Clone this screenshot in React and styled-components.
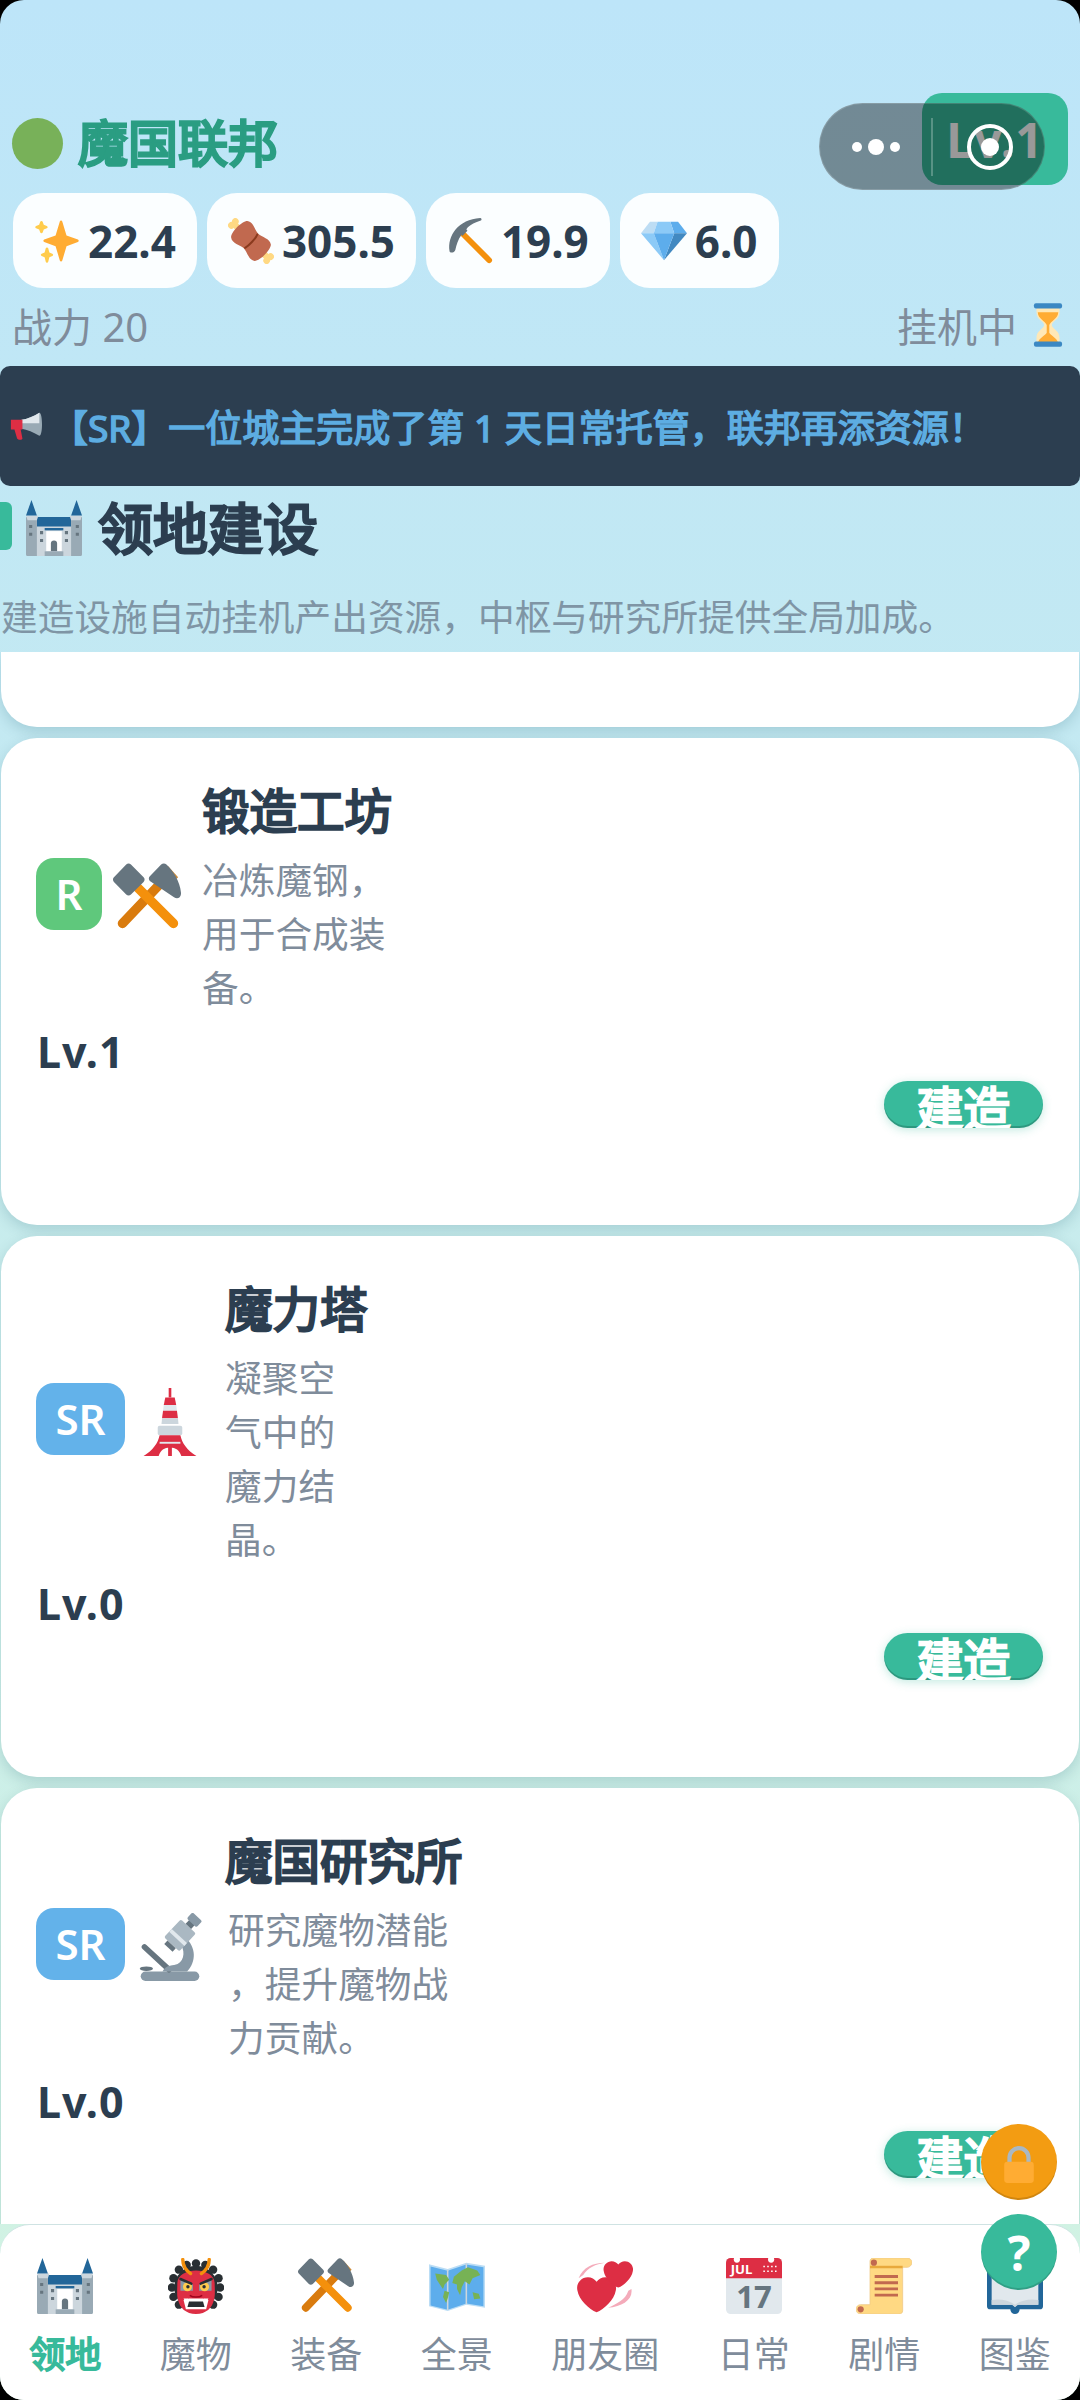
import styled, { createGlobalStyle } from 'styled-components';

const GlobalStyle = createGlobalStyle`
    html, body {
        margin: 0;
        padding: 0;
        background: #000;
    }
    * {
        box-sizing: border-box;
    }
`;

const FONT = `"Noto Sans", "Noto Sans CJK SC", sans-serif`;
const INK = '#2c3e50';
const MUTED = '#7f8c9b';
const TEAL = '#38ba9b';
const HEART = 'M35.885 11.833c0-5.45-4.418-9.868-9.867-9.868-3.308 0-6.227 1.633-8.018 4.129-1.791-2.496-4.71-4.129-8.017-4.129-5.45 0-9.868 4.417-9.868 9.868 0 .772.098 1.52.266 2.241C1.751 22.587 11.216 31.568 18 34.034c6.783-2.466 16.249-11.447 17.617-19.959.17-.721.268-1.469.268-2.242z';

const Screen = styled.div`
    position: relative;
    width: 1080px;
    height: 2400px;
    overflow: hidden;
    display: flex;
    flex-direction: column;
    border-radius: 24px;
    background: linear-gradient(180deg, #bde5f9 0%, #c3e9f2 30%, #d2f3e2 100%);
    font-family: ${FONT};
    color: ${INK};
`;

const EmojiSvg = styled.svg`
    display: block;
    flex: none;
    width: ${(p) => p.$size}px;
    height: ${(p) => p.$size}px;
`;

function Emoji({ size, children }) {
    return <EmojiSvg $size={size} viewBox="0 0 36 36">{children}</EmojiSvg>;
}

const Sparkles = ({ size }) => <Emoji size={size}>
    <path fill="#FFAC33" d="M34.347 16.893l-8.899-3.294-3.323-10.891c-.128-.42-.517-.708-.956-.708-.439 0-.828.288-.956.708l-3.322 10.891-8.9 3.294c-.393.146-.653.519-.653.938 0 .418.26.793.653.938l8.895 3.293 3.324 11.223c.126.424.516.715.959.715.442 0 .833-.291.959-.716l3.324-11.223 8.896-3.293c.391-.144.652-.518.652-.937 0-.418-.261-.792-.653-.938z" />
    <path fill="#FFCC4D" d="M14.347 27.894l-2.314-.856-.9-3.3c-.118-.436-.513-.738-.964-.738-.451 0-.846.302-.965.737l-.9 3.3-2.313.856c-.393.145-.653.52-.653.938 0 .418.26.793.653.938l2.301.853.907 3.622c.112.444.511.756.97.756.459 0 .858-.312.97-.757l.907-3.622 2.301-.853c.393-.144.653-.519.653-.937 0-.418-.26-.793-.653-.937zM10.009 6.231l-2.364-.875-.876-2.365c-.145-.393-.519-.653-.938-.653-.418 0-.792.26-.938.653l-.875 2.365-2.365.875c-.393.146-.653.52-.653.938 0 .418.26.793.653.938l2.365.875.875 2.365c.146.393.52.653.938.653.418 0 .792-.26.938-.653l.875-2.365 2.365-.875c.393-.146.653-.52.653-.938 0-.418-.26-.792-.653-.938z" />
</Emoji>;

const Meat = ({ size }) => <Emoji size={size}>
    <g transform="rotate(-45 18 18)">
        <rect x="15.500" y="-1" width="5" height="38" fill="#FFD983" />
        <circle cx="15.800" cy="-1.500" r="2.600" fill="#FFD983" />
        <circle cx="20.200" cy="-1.500" r="2.600" fill="#FFD983" />
        <circle cx="15.800" cy="37.500" r="2.600" fill="#FFD983" />
        <circle cx="20.200" cy="37.500" r="2.600" fill="#FFD983" />
        <path fill="#C1694F" d="M9 5c3-3 15-3 18 0 3 4-1 9-1 13s4 9 1 13c-3 3-15 3-18 0-3-4 1-9 1-13S6 9 9 5z" />
        <path fill="none" stroke="#8A3A1E" strokeWidth="1.600" strokeLinecap="round" d="M11 18.500c3 .8 11 .8 14-.6" />
    </g>
</Emoji>;

const Pick = ({ size }) => <Emoji size={size}>
    <path fill="none" stroke="#F4900C" strokeWidth="4.500" strokeLinecap="round" d="M10 10l23 23" />
    <path fill="#66757F" d="M2 26C0 14 9 1 26 0c1 0 1.500 1.500.500 2-6 2-10 4-12 8l-3 3c-3 4-4 8-5 12-.5 2-4 3-4.500 1z" />
    <path fill="#66757F" d="M8 8l4-3 4 5-4 4z" />
</Emoji>;

const Gem = ({ size }) => <Emoji size={size}>
    <path fill="#BDDDF4" d="M13 3H7l-7 9h10z" />
    <path fill="#5DADEC" d="M36 12l-7-9h-6l3 9z" />
    <path fill="#4289C1" d="M26 12h10L18 33z" />
    <path fill="#8CCAF7" d="M10 12H0l18 21zm3-9l-3 9h16l-3-9z" />
    <path fill="#5DADEC" d="M18 33l-8-21h16z" />
</Emoji>;

const Hourglass = ({ size }) => <Emoji size={size}>
    <path fill="#FFE8B6" d="M9 4h18v4c0 6-6 7-6 10s6 4 6 10v4H9v-4c0-6 6-7 6-10S9 14 9 8z" />
    <path fill="#FFAC33" d="M10 8h16c0 5-6 7-7 10v6c1 2 6 4 7 8H10c1-4 6-6 7-8v-6c-1-3-7-5-7-10z" />
    <rect x="7" y="1" width="22" height="4" rx="1.500" fill="#3B88C3" />
    <rect x="7" y="31" width="22" height="4" rx="1.500" fill="#3B88C3" />
</Emoji>;

const Megaphone = ({ size }) => <Emoji size={size}>
    <path fill="#99AAB5" d="M33 3c2 0 3 6 3 13s-1 13-3 13c-6-4-14-7-20-8V11c6-1 14-4 20-8z" />
    <path fill="#E1E8ED" d="M33 3c-6 4-14 7-20 8v4h20z" />
    <path fill="#DD2E44" d="M1 11h13v11H12l2 10c0 2-5 2-6 0L5 22H1z" />
</Emoji>;

const Castle = ({ size }) => <Emoji size={size}>
    <path fill="#CCD6DD" d="M6 13h24v23H6z" />
    <path fill="#226699" d="M7 11h22v6H7z" />
    <path fill="#99AAB5" d="M0 11h7v25H1a1 1 0 0 1-1-1zM29 11h7v24a1 1 0 0 1-1 1h-6z" />
    <path fill="#CCD6DD" d="M0 10h8l-1 3H1zM28 10h8l-1 3h-6z" />
    <path fill="#226699" d="M3.500 0L7 10H0zM32.500 0L36 10h-7z" />
    <path fill="#226699" d="M12 18h12v1.500H12z" />
    <path fill="#FFF" d="M13 20h10v13H13z" />
    <path fill="#66757F" d="M16 33v-5a2 2 0 0 1 4 0v5z" />
    <path fill="#99AAB5" d="M12 33h12v3H12z" />
    <path fill="#66757F" d="M2 16h2v2H2zM2 21h2v2H2zM32 16h2v2h-2zM32 21h2v2h-2zM9 20h2v2H9zM9 25h2v2H9zM25 20h2v2h-2zM25 25h2v2h-2z" />
</Emoji>;

const Hammers = ({ size }) => <Emoji size={size}>
    <path stroke="#D97B0E" strokeWidth="5" strokeLinecap="round" d="M25 11L5 32" />
    <path stroke="#F4900C" strokeWidth="5" strokeLinecap="round" d="M11 11l21 21" />
    <path fill="#C98A3A" d="M29 1.500l5.500 6-3 3z" />
    <path fill="#66757F" d="M7 .800c.700-.700 1.800-.700 2.500 0l6.700 6.700c.700.700.700 1.800 0 2.500L9.500 16.700c-.700.700-1.800.700-2.500 0L.500 10c-.700-.700-.700-1.800 0-2.500z" />
    <path fill="#66757F" d="M25.500.800c.800-.800 2-.800 2.800 0 3.500 3.200 7.200 9 7.700 15 .200 2.600-2 3.700-3.700 2.300L19.500 9.500c-.700-.700-.700-1.800 0-2.500z" />
</Emoji>;

const Tower = ({ size }) => <Emoji size={size}>
    <path fill="#DD2E44" d="M17.300 0h1.400v5h-1.400z" />
    <path fill="#DD2E44" d="M15.500 5h5l.800 4h-6.600z" />
    <path fill="#E1E8ED" d="M14.700 9h6.600l.400 3h-7.400z" />
    <path fill="#DD2E44" d="M14.300 12h7.400l.500 4h-8.400z" />
    <path fill="#CCD6DD" d="M13.800 16h8.400l.300 3h-9z" />
    <path fill="#CCD6DD" d="M12.500 20h11a1 1 0 0 1 1 1v3a1 1 0 0 1-1 1h-11a1 1 0 0 1-1-1v-3a1 1 0 0 1 1-1z" />
    <path fill="#DD2E44" d="M12.500 25h11c.800 4 3.500 8 8.500 11H24c-1-3-3-4.500-6-4.500S13 33 12 36H4c5-3 7.700-7 8.500-11z" />
    <path fill="#DD2E44" d="M17 27h2v9h-2z" />
    <path fill="#E1E8ED" d="M12.500 28.500h11v1h-11z" />
</Emoji>;

const Microscope = ({ size }) => <Emoji size={size}>
    <rect x="2.500" y="31" width="31" height="5" rx="2.500" fill="#8899A6" />
    <path fill="none" stroke="#66757F" strokeWidth="3" strokeLinecap="round" d="M4.500 18l13 12" />
    <ellipse cx="5.500" cy="29.500" rx="3.500" ry="1.200" fill="#66757F" />
    <path fill="#8899A6" d="M14 31c2-4 6-3 8-4 4-2 4-8 1-11l3-3c6 5 6 13 1 18z" />
    <g transform="rotate(43 25 10)">
        <rect x="19.500" y="6" width="11" height="13" rx="1" fill="#AAB8C2" />
        <rect x="19.500" y="13" width="11" height="2" fill="#E1E8ED" />
        <rect x="22" y="19" width="6" height="2.500" fill="#66757F" />
        <rect x="23" y="3" width="4" height="3" fill="#66757F" />
        <rect x="21.500" y="-1" width="7" height="4.500" rx="1" fill="#8899A6" />
    </g>
</Emoji>;

const HAIR = [[18,3.500],[24,4.500],[29,7.500],[32.500,13],[33.500,19],[32.500,25],[29,30],[7,30],[3.500,25],[2.500,19],[3.500,13],[7,7.500],[12,4.500]];

const Ogre = ({ size }) => <Emoji size={size}>
    {HAIR.map(([x, y]) => <circle key={x + '-' + y} cx={x} cy={y} r="2.700" fill="#292F33" />)}
    <circle cx="18" cy="19" r="14" fill="#292F33" />
    <path fill="#DD2E44" d="M6 16c0-5 6-8 12-8s12 3 12 8c0 4 .500 8-.500 11-1 5-5 9-11.500 9S7.500 32 6.500 27C5.500 24 6 20 6 16z" />
    <path fill="none" stroke="#F4900C" strokeWidth="2.200" strokeLinecap="round" d="M9.500 1c0 4 2 7 5 9M26.500 1c0 4-2 7-5 9" />
    <path fill="#8899A6" d="M8 14l8 3v4H8zM28 14l-8 3v4h8z" />
    <circle cx="12.500" cy="18.500" r="2.900" fill="#FFCC4D" />
    <circle cx="23.500" cy="18.500" r="2.900" fill="#FFCC4D" />
    <circle cx="12.800" cy="18.500" r="1.100" fill="#292F33" />
    <circle cx="23.200" cy="18.500" r="1.100" fill="#292F33" />
    <path fill="none" stroke="#292F33" strokeWidth="1.600" strokeLinecap="round" d="M8 13.500l7 3M28 13.500l-7 3" />
    <path fill="none" stroke="#A0041E" strokeWidth="1" d="M14 24c2 1.500 6 1.500 8 0" />
    <path fill="#FFF" d="M10 27l3.500-1h9l3.500 1-1.500 6h-13z" />
    <path fill="#292F33" d="M13.500 28h9l1 3.500h-11z" />
    <path fill="#FFF" d="M10 26l1.500 3 1.500-3zM26 26l-1.500 3-1.500-3z" />
</Emoji>;

const WorldMap = ({ size }) => <Emoji size={size}>
    <path fill="#BBDDF5" d="M0 4l12 3 12-4 12 2v27l-12-2-12 4-12-3z" />
    <path fill="#5DADEC" d="M1 5.500l11 2.700 12-4 11 1.800v25l-11-1.800-12 4-11-2.700z" />
    <path fill="#CCD6DD" d="M11.500 7.500h1v26h-1zM23.500 3.500h1v26h-1z" />
    <path fill="#77B255" d="M4 10l7 1 2 3-3 3-1 3-2-3-2-3zM10 21l3 1-1 4-1 3-2-4zM16 12l5-4 4-2 6 2 2 3-5 2-2 4-3-2-2 4-1 5-2-4v-3l-3-1z" />
    <path fill="#77B255" d="M28 22l4 1 1 3-4 .500z" />
</Emoji>;

const Hearts = ({ size }) => <Emoji size={size}>
    <path fill="#F4ABBA" d="M1 13C4 6 10 3 18 3c-6 1-11 3-14 8zM35 20c1 7-6 11-15 12 6-3 11-5 13-11z" />
    <path fill="#DD2E44" transform="translate(0 11) scale(.7)" d={HEART} />
    <path fill="#DD2E44" transform="translate(17 1) scale(.53)" d={HEART} />
</Emoji>;

const CalendarMonth = styled.text`
    font-family: ${FONT};
    font-weight: 700;
    font-size: 8.5px;
    fill: #fff;
`;

const CalendarDay = styled.text`
    font-family: ${FONT};
    font-weight: 700;
    font-size: 20px;
    fill: #66757f;
`;

const Calendar = ({ size }) => <Emoji size={size}>
    <rect x="0" y="0" width="36" height="36" rx="3" fill="#E1E8ED" />
    <path fill="#DD2E44" d="M3 0h30a3 3 0 0 1 3 3v10H0V3a3 3 0 0 1 3-3z" />
    <circle cx="7" cy="1" r="2" fill="#FFF" />
    <circle cx="29" cy="1" r="2" fill="#FFF" />
    <CalendarMonth x="3" y="10.500">JUL</CalendarMonth>
    <path fill="#FFF" d="M24 5h1v1h-1zM26.500 5h1v1h-1zM29 5h1v1h-1zM31.500 5h1v1h-1zM24 8h1v1h-1zM26.500 8h1v1h-1zM29 8h1v1h-1zM31.500 8h1v1h-1z" />
    <CalendarDay x="18" y="32" textAnchor="middle">17</CalendarDay>
</Emoji>;

const Scroll = ({ size }) => <Emoji size={size}>
    <path fill="#FFD983" stroke="#F0C987" strokeWidth=".5" d="M9 2c0-1 1-2 2-2h22c1.500 0 3 1.300 3 2.800C36 4.500 34.500 6 33 6h-3v28c0 1-1 2-2 2H3c-1.700 0-3-1.300-3-3s1.300-3 3-3h6z" />
    <rect x="9" y="5" width="21" height="1.600" fill="#E8A93C" />
    <circle cx="11.500" cy="3" r="2" fill="#C1694F" />
    <circle cx="3" cy="33" r="2" fill="#C1694F" />
    <path fill="#C1694F" d="M12 11h15v1.800H12zM12 15h15v1.800H12zM12 19h15v1.800H12zM12 23h15v1.800H12z" />
</Emoji>;

const Book = ({ size }) => <Emoji size={size}>
    <path fill="#226699" d="M2 4h32a2 2 0 0 1 2 2v25a2 2 0 0 1-2 2H21a3 3 0 0 1-6 0H2a2 2 0 0 1-2-2V6a2 2 0 0 1 2-2z" />
    <path fill="#E1E8ED" d="M3 7h30v23H20c-1 0-1.500 1-2 1.500-.5-.5-1-1.500-2-1.500H3z" />
    <path fill="#CCD6DD" d="M3 27c5-1 11 0 15 3 4-3 10-4 15-3v3H20l-2 1.500-2-1.500H3z" />
</Emoji>;

const Lock = ({ size }) => <Emoji size={size}>
    <path fill="none" stroke="#AAB8C2" strokeWidth="4" d="M9 18V11a9 9 0 0 1 18 0v7" />
    <path fill="#FFAC33" d="M4 18a3 3 0 0 1 3-3h22a3 3 0 0 1 3 3v14a3 3 0 0 1-3 3H7a3 3 0 0 1-3-3z" />
</Emoji>;

const TopBar = styled.header`
    display: flex;
    align-items: center;
    justify-content: space-between;
    height: 92px;
    margin-top: 93px;
    padding: 0 12px;
`;

const Federation = styled.div`
    display: flex;
    align-items: center;
    gap: 15px;
    margin-top: 8px;
`;

const Dot = styled.span`
    display: block;
    width: 51px;
    height: 51px;
    border-radius: 50%;
    background: #78b159;
`;

const FederationName = styled.h1`
    margin: 0;
    font-size: 50px;
    line-height: 60px;
    font-weight: 400;
    color: #2a9d82;
    -webkit-text-stroke: 2.8px #2a9d82;
`;

const LevelBox = styled.div`
    width: 146px;
    height: 92px;
    border-radius: 20px;
    background: ${TEAL};
    color: #fff;
    font-size: 48px;
    font-weight: 700;
    letter-spacing: 1px;
    display: flex;
    align-items: center;
    justify-content: center;
`;

const Capsule = styled.div`
    position: absolute;
    top: 103px;
    left: 819px;
    width: 226px;
    height: 87px;
    border-radius: 44px;
    background: rgba(0, 0, 0, 0.4);
    border: 1px solid rgba(255, 255, 255, 0.15);
    display: flex;
    align-items: center;
`;

const CapsuleSide = styled.div`
    flex: 1;
    height: 58px;
    display: flex;
    align-items: center;
    justify-content: center;
    gap: 6px;
    & + & {
        border-left: 2px solid rgba(255, 255, 255, 0.25);
    }
`;

const MenuDot = styled.span`
    display: block;
    width: ${(p) => p.$size}px;
    height: ${(p) => p.$size}px;
    border-radius: 50%;
    background: #fff;
`;

const Target = styled.span`
    display: flex;
    align-items: center;
    justify-content: center;
    width: 46px;
    height: 46px;
    border: 4px solid #fff;
    border-radius: 50%;
    margin-left: 2px;
`;

const ResourceRow = styled.div`
    display: flex;
    gap: 10px;
    margin-top: 8px;
    padding: 0 13px;
`;

const Resource = styled.div`
    display: flex;
    align-items: center;
    gap: 8px;
    height: 95px;
    padding: 0 21px;
    border-radius: 30px;
    background: rgba(255, 255, 255, 0.93);
    font-size: 44px;
    font-weight: 700;
`;

const StatusRow = styled.div`
    display: flex;
    align-items: center;
    justify-content: space-between;
    height: 78px;
    padding: 0 9px 5px 12px;
    color: ${MUTED};
    font-size: 40px;
`;

const Idle = styled.div`
    display: flex;
    align-items: center;
    gap: 8px;
`;

const Banner = styled.div`
    display: flex;
    align-items: center;
    gap: 9px;
    height: 120px;
    padding: 0 10px;
    border-radius: 10px;
    background: ${INK};
    color: #5dade2;
    font-size: 37px;
    -webkit-text-stroke: 1.5px #5dade2;
    white-space: nowrap;
`;

const SectionHead = styled.div`
    display: flex;
    align-items: center;
    gap: 14px;
    height: 56px;
    margin-top: 14px;
`;

const SectionMark = styled.span`
    display: block;
    width: 12px;
    height: 48px;
    margin-bottom: 4px;
    border-radius: 0 6px 6px 0;
    background: ${TEAL};
`;

const SectionTitle = styled.h2`
    margin: 0 0 0 2px;
    font-size: 55px;
    line-height: 60px;
    font-weight: 400;
    color: ${INK};
    -webkit-text-stroke: 3px ${INK};
`;

const SectionHint = styled.p`
    margin: 36px 0 10px;
    padding-left: 1px;
    font-size: 36.7px;
    line-height: 50px;
    color: #7f95a5;
    white-space: nowrap;
`;

const Scroller = styled.main`
    flex: 1;
    min-height: 0;
    overflow: hidden;
    display: flex;
    flex-direction: column;
    gap: 11px;
    padding: 0 1px;
`;

const CutCard = styled.div`
    flex: none;
    height: 75px;
    border-radius: 0 0 36px 36px;
    background: #fff;
    box-shadow: 0 5px 14px rgba(0, 70, 90, 0.17);
`;

const Card = styled.article`
    flex: none;
    padding: 40px 36px 97px 35px;
    border-radius: 36px;
    background: #fff;
    box-shadow: 0 5px 14px rgba(0, 70, 90, 0.17);
`;

const CardTop = styled.div`
    display: flex;
    align-items: center;
    gap: 11px;
`;

const Rarity = styled.span`
    display: block;
    flex: none;
    height: 72px;
    margin-bottom: 6px;
    padding: 0 19.5px;
    border-radius: 18px;
    background: ${(p) => p.$color};
    color: #fff;
    font-size: 42px;
    line-height: 72px;
    font-weight: 600;
`;

const CardBody = styled.div`
    margin-left: 10px;
`;

const CardName = styled.h3`
    margin: 0 0 9px;
    height: 66px;
    font-size: 47.5px;
    line-height: 66px;
    font-weight: 400;
    white-space: nowrap;
    color: ${INK};
    -webkit-text-stroke: 2.4px ${INK};
`;

const CardDesc = styled.p`
    margin: 0 0 0 ${(p) => p.$indent || 0}px;
    width: ${(p) => p.$width}px;
    font-size: 36.7px;
    line-height: 54px;
    color: ${MUTED};
    line-break: anywhere;
`;

const CardLevel = styled.div`
    margin-top: 8px;
    padding-left: 1px;
    font-size: 43px;
    line-height: 58px;
    font-weight: 700;
    letter-spacing: 1px;
`;

const BuildRow = styled.div`
    display: flex;
    justify-content: flex-end;
`;

const BuildButton = styled.button`
    width: 159px;
    height: 47px;
    padding: 4px 0 0;
    border: 0;
    border-radius: 24px;
    overflow: hidden;
    background: ${TEAL};
    box-shadow: 0 2px 10px rgba(56, 186, 155, 0.3), inset 0 -2px 0 rgba(0, 0, 0, 0.18);
    color: #fff;
    font-family: ${FONT};
    font-size: 47px;
    line-height: 47px;
    -webkit-text-stroke: 2.4px #fff;
`;

const FloatButton = styled.div`
    position: absolute;
    left: 981px;
    top: ${(p) => p.$top}px;
    width: 76px;
    height: 76px;
    padding-top: ${(p) => p.$nudge || 0}px;
    border-radius: 50%;
    display: flex;
    align-items: center;
    justify-content: center;
    background: ${(p) => p.$color};
    box-shadow: inset 0 -2px 0 rgba(0, 0, 0, 0.14);
    color: #fff;
    font-size: 48px;
    font-weight: 700;
`;

const TabBar = styled.nav`
    flex: none;
    display: flex;
    height: 176px;
    padding-top: 33px;
    border-top: 1px solid #cfe3e3;
    border-radius: 30px 30px 0 0;
    background: #fff;
`;

const Tab = styled.div`
    flex: 1 1 auto;
    display: flex;
    flex-direction: column;
    align-items: center;
    padding: 0 29px;
`;

const TabLabel = styled.span`
    margin-top: 16px;
    font-size: 36px;
    line-height: 50px;
    white-space: nowrap;
    color: ${(p) => (p.$active ? TEAL : MUTED)};
    ${(p) => p.$active && `-webkit-text-stroke: 1.8px ${TEAL};`}
`;

const GREEN = '#5fc87c';
const BLUE = '#63b2ea';

const BUILDINGS = [
    { name: '锻造工坊', desc: '冶炼魔钢，用于合成装备。', rarity: 'R', color: GREEN, level: 1, Icon: Hammers, width: 184 },
    { name: '魔力塔', desc: '凝聚空气中的魔力结晶。', rarity: 'SR', color: BLUE, level: 0, Icon: Tower, width: 111 },
    { name: '魔国研究所', desc: '研究魔物潜能，提升魔物战力贡献。', rarity: 'SR', color: BLUE, level: 0, Icon: Microscope, width: 221, indent: 3 },
];

const TABS = [
    { label: '领地', Icon: Castle, active: true },
    { label: '魔物', Icon: Ogre },
    { label: '装备', Icon: Hammers },
    { label: '全景', Icon: WorldMap },
    { label: '朋友圈', Icon: Hearts },
    { label: '日常', Icon: Calendar },
    { label: '剧情', Icon: Scroll },
    { label: '图鉴', Icon: Book },
];

const RESOURCES = [
    { value: '22.4', Icon: Sparkles },
    { value: '305.5', Icon: Meat },
    { value: '19.9', Icon: Pick },
    { value: '6.0', Icon: Gem },
];

export default function App() {
    return <Screen>
        <GlobalStyle />
        <TopBar>
            <Federation>
                <Dot />
                <FederationName>魔国联邦</FederationName>
            </Federation>
            <LevelBox>Lv.1</LevelBox>
        </TopBar>
        <Capsule>
            <CapsuleSide>
                <MenuDot $size={10} />
                <MenuDot $size={16} />
                <MenuDot $size={10} />
            </CapsuleSide>
            <CapsuleSide>
                <Target><MenuDot $size={18} /></Target>
            </CapsuleSide>
        </Capsule>

        <ResourceRow>
            {RESOURCES.map(({ value, Icon }) => <Resource key={value}>
                <Icon size={46} />
                {value}
            </Resource>)}
        </ResourceRow>

        <StatusRow>
            <span>战力 20</span>
            <Idle>挂机中 <Hourglass size={46} /></Idle>
        </StatusRow>

        <Banner>
            <Megaphone size={32} />
            【SR】一位城主完成了第 1 天日常托管，联邦再添资源！
        </Banner>

        <SectionHead>
            <SectionMark />
            <Castle size={56} />
            <SectionTitle>领地建设</SectionTitle>
        </SectionHead>
        <SectionHint>建造设施自动挂机产出资源，中枢与研究所提供全局加成。</SectionHint>

        <Scroller>
            <CutCard />
            {BUILDINGS.map(({ name, desc, rarity, color, level, Icon, width, indent }) => <Card key={name}>
                <CardTop>
                    <Rarity $color={color}>{rarity}</Rarity>
                    <Icon size={68} />
                    <CardBody>
                        <CardName>{name}</CardName>
                        <CardDesc $width={width} $indent={indent}>{desc}</CardDesc>
                    </CardBody>
                </CardTop>
                <CardLevel>Lv.{level}</CardLevel>
                <BuildRow>
                    <BuildButton>建造</BuildButton>
                </BuildRow>
            </Card>)}
        </Scroller>

        <TabBar>
            {TABS.map(({ label, Icon, active }) => <Tab key={label}>
                <Icon size={56} />
                <TabLabel $active={active}>{label}</TabLabel>
            </Tab>)}
        </TabBar>

        <FloatButton $top={2124} $color="#f39c12" $nudge={6}><Lock size={38} /></FloatButton>
        <FloatButton $top={2214} $color={TEAL}>?</FloatButton>
    </Screen>;
}
